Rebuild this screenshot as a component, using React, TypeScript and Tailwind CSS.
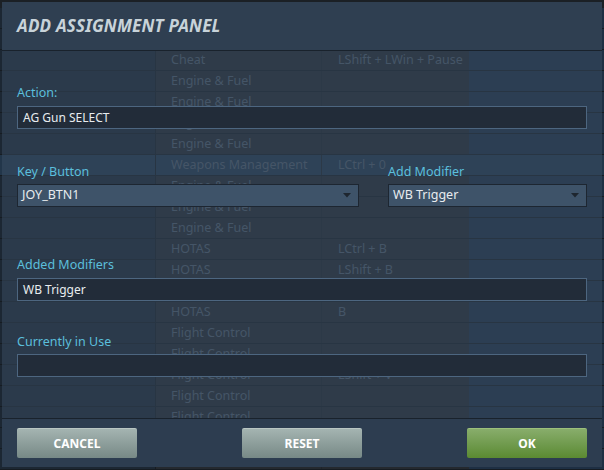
import React from "react"

const rows: [string, string, boolean?][] = [
  ["", ""],
  ["", ""],
  ["Cheat", "LShift + LWin + Pause"],
  ["Engine & Fuel", ""],
  ["Engine & Fuel", ""],
  ["Engine & Fuel", ""],
  ["Engine & Fuel", ""],
  ["Weapons Management", "LCtrl + 0", true],
  ["Engine & Fuel", ""],
  ["Engine & Fuel", ""],
  ["Engine & Fuel", ""],
  ["HOTAS", "LCtrl + B"],
  ["HOTAS", "LShift + B"],
  ["HOTAS", ""],
  ["HOTAS", "B"],
  ["Flight Control", ""],
  ["Flight Control", ""],
  ["Flight Control", "LShift + V"],
  ["Flight Control", ""],
  ["Flight Control", ""],
  ["Flight Control", ""],
  ["Flight Control", ""],
]

function BindingsTable() {
  return (
    <div className="flex flex-col pt-[8px]">
      {rows.map(([cat, key, sel], i) => (
        <div
          key={i}
          className={
            "flex h-[21px] border-b border-[#161c22] text-[12.5px] leading-[20px] text-[#515d6a] " +
            (sel ? "bg-[#22364a]" : "")
          }
        >
          <div className={"w-[156px] border-r border-[#161c22] " + (sel ? "" : "bg-[#1c2733]")} />
          <div className={"w-[166px] border-r border-[#1f242a] pl-[15px] " + (sel ? "" : "bg-[#24292f]")}>{cat}</div>
          <div className={"w-[147px] pl-[16px] " + (sel ? "" : "bg-[#24292f]")}>{key}</div>
          <div className={"flex-1 " + (sel ? "" : "bg-[#1e2f43]")} />
        </div>
      ))}
    </div>
  )
}

function Label({ children }: { children: React.ReactNode }) {
  return <div className="h-[16px] text-[12.5px] leading-[18px] text-[#5bbfdc]">{children}</div>
}

function TextBox({ value }: { value?: string }) {
  return (
    <div className="h-[23px] border border-[#4d6680] bg-[#222c39] px-[5px] text-[12px] leading-[21px] text-[#e8ecef]">
      {value}
    </div>
  )
}

function Select({ value, className }: { value: string; className?: string }) {
  return (
    <div
      className={
        "flex h-[23px] items-center justify-between border border-[#1d2631] bg-[#3e5369] pl-[4px] pr-[7px] text-[12.5px] text-[#e8ecef] " +
        (className ?? "")
      }
    >
      <span>{value}</span>
      <svg width="8" height="5" viewBox="0 0 8 5">
        <path d="M0 0 L8 0 L4 4.5 Z" fill="#1e262f" />
      </svg>
    </div>
  )
}

function Btn({ label, green }: { label: string; green?: boolean }) {
  return (
    <button
      className={
        "h-[30px] w-[120px] rounded-[2px] border-t text-[12px] font-bold text-white " +
        (green
          ? "border-[#9cc07c] bg-gradient-to-b from-[#88ad6b] to-[#5b8a31]"
          : "border-[#b9c6c3] bg-gradient-to-b from-[#a4b4b1] to-[#778986]")
      }
    >
      {label}
    </button>
  )
}

export default function App() {
  return (
    <div
      className="relative h-[470px] w-[604px] overflow-hidden bg-[#1b2025]"
      style={{ fontFamily: '"Noto Sans", "DejaVu Sans", sans-serif' }}
    >
      <BindingsTable />

      <div className="absolute bottom-[3px] left-[2px] right-[2px] top-[2px] flex flex-col">
        <div className="flex h-[49px] items-center border-b border-[#19222c] bg-[#2f3f51] pl-[15px]">
          <h2 className="text-[17px] font-bold italic tracking-[0.2px] text-[#c8d3d9]">ADD ASSIGNMENT PANEL</h2>
        </div>

        <div className="flex flex-1 flex-col bg-[#3a4d63]/50 px-[15px] pt-[33px]">
          <Label>Action:</Label>
          <div className="mt-[6px]">
            <TextBox value="AG Gun SELECT" />
          </div>

          <div className="mt-[34px] flex">
            <div className="flex w-[342px] flex-col">
              <Label>Key / Button</Label>
              <Select value="JOY_BTN1" className="mt-[5px]" />
            </div>
            <div className="ml-[29px] flex flex-1 flex-col">
              <Label>Add Modifier</Label>
              <Select value="WB Trigger" className="mt-[5px]" />
            </div>
          </div>

          <div className="mt-[49px]">
            <Label>Added Modifiers</Label>
          </div>
          <div className="mt-[6px]">
            <TextBox value="WB Trigger" />
          </div>

          <div className="mt-[32px]">
            <Label>Currently in Use</Label>
          </div>
          <div className="mt-[5px]">
            <TextBox />
          </div>
        </div>

        <div className="flex items-center justify-between border-t border-[#19222c] bg-[#2d3d50] px-[15px] py-[9px]">
          <Btn label="CANCEL" />
          <Btn label="RESET" />
          <Btn label="OK" green />
        </div>
      </div>
    </div>
  )
}
